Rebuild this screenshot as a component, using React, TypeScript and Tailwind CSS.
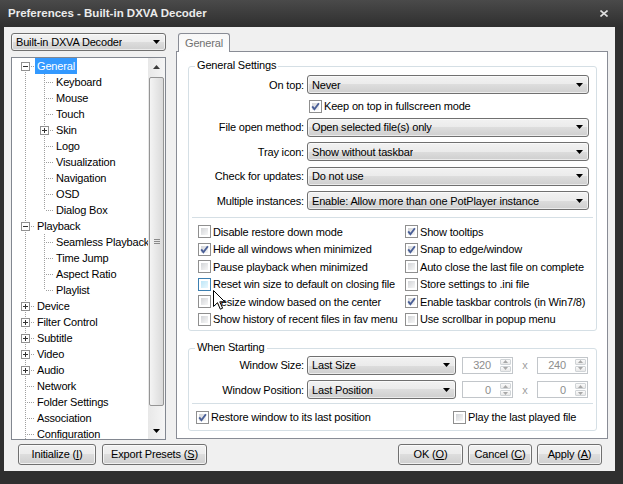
import React from 'react';

type TreeNode = { t: string; l: 0 | 1; e?: '+' | '-'; sel?: boolean; first?: boolean; last?: boolean };

const tree: TreeNode[] = [
  { t: 'General', l: 0, e: '-', sel: true, first: true },
  { t: 'Keyboard', l: 1 },
  { t: 'Mouse', l: 1 },
  { t: 'Touch', l: 1 },
  { t: 'Skin', l: 1, e: '+' },
  { t: 'Logo', l: 1 },
  { t: 'Visualization', l: 1 },
  { t: 'Navigation', l: 1 },
  { t: 'OSD', l: 1 },
  { t: 'Dialog Box', l: 1, last: true },
  { t: 'Playback', l: 0, e: '-' },
  { t: 'Seamless Playback', l: 1 },
  { t: 'Time Jump', l: 1 },
  { t: 'Aspect Ratio', l: 1 },
  { t: 'Playlist', l: 1, last: true },
  { t: 'Device', l: 0, e: '+' },
  { t: 'Filter Control', l: 0, e: '+' },
  { t: 'Subtitle', l: 0, e: '+' },
  { t: 'Video', l: 0, e: '+' },
  { t: 'Audio', l: 0, e: '+' },
  { t: 'Network', l: 0 },
  { t: 'Folder Settings', l: 0 },
  { t: 'Association', l: 0 },
  { t: 'Configuration', l: 0 },
];

// left column / right column of the checkbox block
const options: [string, boolean, string, boolean][] = [
  ['Disable restore down mode', false, 'Show tooltips', true],
  ['Hide all windows when minimized', true, 'Snap to edge/window', true],
  ['Pause playback when minimized', false, 'Auto close the last file on complete', false],
  ['Reset win size to default on closing file', false, 'Store settings to .ini file', false],
  ['Resize window based on the center', false, 'Enable taskbar controls (in Win7/8)', true],
  ['Show history of recent files in fav menu', false, 'Use scrollbar in popup menu', false],
];

const btnBg = 'bg-[linear-gradient(#f2f2f2,#ebebeb_50%,#dddddd_50%,#cfcfcf)]';

function Arrow() {
  return (
    <svg width="7" height="4" viewBox="0 0 7 4" className="shrink-0">
      <path d="M0 0H7L3.5 4Z" fill="#000" />
    </svg>
  );
}

function Combo({ text, className }: { text: string; className: string }) {
  return (
    <div
      className={`flex items-center justify-between rounded-[3px] border border-[#707070] ${btnBg} pl-[4px] pr-[5px] shadow-[inset_0_0_0_1px_rgba(255,255,255,0.6)] ${className}`}
    >
      <span className="truncate">{text}</span>
      <Arrow />
    </div>
  );
}

function Check({ checked, hover }: { checked?: boolean; hover?: boolean }) {
  return (
    <span
      className={`relative flex h-[13px] w-[13px] shrink-0 border bg-white p-[2px] ${hover ? 'border-[#3c7fb1]' : 'border-[#8f8f8f]'}`}
    >
      <span
        className={`flex-1 bg-linear-to-br ${hover ? 'from-[#bde6f8] to-[#eaf8fd]' : 'from-[#d3d5d8] to-[#f7f7f7]'}`}
      />
      {checked && (
        <svg className="absolute left-0 top-0" width="11" height="11" viewBox="0 0 11 11">
          <path d="M2.2 5.4 L4.4 8.2 L8.9 2.2" fill="none" stroke="#4a5f97" strokeWidth="1.9" />
        </svg>
      )}
    </span>
  );
}

function CheckItem({ label, checked, hover, className }: { label: string; checked?: boolean; hover?: boolean; className?: string }) {
  return (
    <div className={`flex items-center gap-[2px] ${className ?? ''}`}>
      <Check checked={checked} hover={hover} />
      <span className="whitespace-nowrap">{label}</span>
    </div>
  );
}

function Cell({ top, bottom, expand }: { top: boolean; bottom: boolean; expand?: '+' | '-' }) {
  return (
    <svg width="19" height="16" viewBox="0 0 19 16" className="block shrink-0">
      {top && <line x1="9.5" y1="0" x2="9.5" y2="8" stroke="#a0a0a0" strokeDasharray="1 1" />}
      {bottom && <line x1="9.5" y1="8" x2="9.5" y2="16" stroke="#a0a0a0" strokeDasharray="1 1" />}
      <line x1="11" y1="8.5" x2="19" y2="8.5" stroke="#a0a0a0" strokeDasharray="1 1" />
      {expand && (
        <>
          <rect x="5.5" y="4.5" width="8" height="8" fill="#fff" stroke="#919191" />
          <line x1="7" y1="8.5" x2="12" y2="8.5" stroke="#333" />
          {expand === '+' && <line x1="9.5" y1="6" x2="9.5" y2="11" stroke="#333" />}
        </>
      )}
    </svg>
  );
}

function VLine() {
  return (
    <svg width="19" height="16" viewBox="0 0 19 16" className="block shrink-0">
      <line x1="9.5" y1="0" x2="9.5" y2="16" stroke="#a0a0a0" strokeDasharray="1 1" />
    </svg>
  );
}

function SpinHalf({ up }: { up?: boolean }) {
  return (
    <div className="flex flex-1 items-center justify-center rounded-[1px] border border-[#d0d4d7] bg-linear-to-b from-[#fbfbfb] to-[#e8e8e8]">
      <svg width="5" height="3" viewBox="0 0 5 3">
        <path d={up ? 'M0 3H5L2.5 0Z' : 'M0 0H5L2.5 3Z'} fill="#a8a8a8" />
      </svg>
    </div>
  );
}

function Spin({ v }: { v: string }) {
  return (
    <div className="flex h-[17px] w-[51px] items-center border border-[#c2c6ca] bg-white">
      <span className="flex-1 pr-[8px] text-right text-[#8d8d8d]">{v}</span>
      <div className="flex h-full w-[13px] flex-col gap-px p-px">
        <SpinHalf up />
        <SpinHalf />
      </div>
    </div>
  );
}

function Btn({ text, hot, className }: { text: string; hot: string; className: string }) {
  return (
    <button
      className={`flex h-[21px] items-center justify-center rounded-[3px] border border-[#707070] ${btnBg} text-black shadow-[inset_0_0_0_1px_rgba(255,255,255,0.7)] ${className}`}
    >
      {text} (<u>{hot}</u>)
    </button>
  );
}

function Row({ label, children }: { label: string; children: React.ReactNode }) {
  return (
    <div className="flex h-[24.5px] items-center">
      <span className="w-[115px] text-right">{label}</span>
      {children}
    </div>
  );
}

export default function App() {
  return (
    <div className="relative h-[484px] w-[623px] overflow-hidden bg-[#2f2f2f] text-[11px] tracking-[-0.17px] text-black [font-family:'Liberation_Sans',Arial,sans-serif]">
      {/* title bar */}
      <div className="flex h-[27px] items-center justify-between bg-linear-to-b from-[#4a4a4a] to-[#2f2f2f] pl-[8px] pr-[15px]">
        <span className="text-[11.5px] font-bold tracking-normal text-[#ebebeb]">Preferences - Built-in DXVA Decoder</span>
        <svg width="8" height="7" viewBox="0 0 8 7">
          <path d="M0.5 0.5L7.5 6.5M7.5 0.5L0.5 6.5" stroke="#e0e0e0" strokeWidth="1.6" />
        </svg>
      </div>

      {/* client */}
      <div className="ml-[4px] flex h-[444px] w-[611px] flex-col bg-[#f0f0f0]">
        <div className="flex pl-[7px] pt-[6px]">
          {/* left: preset combo + tree */}
          <div className="flex w-[155px] flex-col">
            <Combo text="Built-in DXVA Decoder" className="h-[18px] w-full pl-[3px]" />
            <div className="mt-[6px] flex h-[383px] border border-[#828790] bg-white">
              <div className="flex-1 overflow-hidden pl-[4px]">
                {tree.map((n, i) => (
                  <div key={i} className="flex h-[16px] items-center">
                    {n.l === 1 && <VLine />}
                    <Cell top={!n.first} bottom={!n.last} expand={n.e} />
                    <span
                      className={
                        n.sel
                          ? 'h-[16px] whitespace-nowrap bg-[#3399ff] px-[2px] leading-[16px] text-white'
                          : 'h-[16px] whitespace-nowrap px-[2px] leading-[16px]'
                      }
                    >
                      {n.t}
                    </span>
                  </div>
                ))}
              </div>
              {/* scrollbar */}
              <div className="flex w-[17px] flex-col bg-linear-to-r from-[#e8e8e8] to-[#f5f5f5]">
                <div className="flex h-[17px] items-center justify-center">
                  <svg width="7" height="4" viewBox="0 0 7 4">
                    <path d="M0 4H7L3.5 0Z" fill="#3c3c3c" />
                  </svg>
                </div>
                <div className="flex flex-1 flex-col">
                  <div className="mx-[1px] mt-[2px] flex h-[329px] items-center justify-center rounded-[2px] border border-[#959595] bg-linear-to-r from-[#f4f4f4] to-[#dadada]">
                    <div className="flex w-[6px] flex-col gap-[1px]">
                      <div className="h-px bg-[#8a8a8a]" />
                      <div className="h-px bg-[#8a8a8a]" />
                      <div className="h-px bg-[#8a8a8a]" />
                    </div>
                  </div>
                </div>
                <div className="flex h-[17px] items-center justify-center">
                  <Arrow />
                </div>
              </div>
            </div>
          </div>

          {/* right: tab */}
          <div className="ml-[10px] flex w-[432px] flex-col">
            <div className="flex h-[18px]">
              <div className="relative z-10 ml-[2px] flex h-[19px] items-center rounded-t-[3px] border border-b-0 border-[#898c95] bg-linear-to-b from-[#f7f7f7] to-[#ffffff] px-[6px] text-[#707070]">
                General
              </div>
            </div>
            <div className="h-[388px] border border-[#898c95] bg-white pl-[11px] pr-[10px] pt-[14px]">
              {/* General Settings */}
              <div className="relative h-[265px] rounded-[3px] border border-[#d5dfe5] pt-[5.5px]">
                <span className="absolute -top-[9px] left-[6px] bg-white px-[2px] leading-[14px]">General Settings</span>
                <Row label="On top:">
                  <Combo text="Never" className="ml-[3px] h-[19px] w-[282px]" />
                </Row>
                <div className="flex h-[18px] items-center pl-[120px]">
                  <CheckItem label="Keep on top in fullscreen mode" checked />
                </div>
                <Row label="File open method:">
                  <Combo text="Open selected file(s) only" className="ml-[3px] h-[19px] w-[282px]" />
                </Row>
                <Row label="Tray icon:">
                  <Combo text="Show without taskbar" className="ml-[3px] h-[19px] w-[282px]" />
                </Row>
                <Row label="Check for updates:">
                  <Combo text="Do not use" className="ml-[3px] h-[19px] w-[282px]" />
                </Row>
                <Row label="Multiple instances:">
                  <Combo text="Enable: Allow more than one PotPlayer instance" className="ml-[3px] h-[19px] w-[282px]" />
                </Row>
                <div className="mx-[3px] mt-[4px] h-px bg-[#d5dfe5]" />
                <div className="mt-[5px] pl-[9px]">
                  {options.map(([a, ac, b, bc], i) => (
                    <div key={i} className="flex h-[17.5px] items-center">
                      <div className="w-[203px] overflow-hidden">
                        <CheckItem label={a} checked={ac} hover={i === 3} />
                      </div>
                      <CheckItem label={b} checked={bc} className="ml-[4px]" />
                    </div>
                  ))}
                </div>
              </div>

              {/* When Starting */}
              <div className="relative mt-[17px] h-[83px] rounded-[3px] border border-[#d5dfe5] pt-[4px]">
                <span className="absolute -top-[9px] left-[6px] bg-white px-[2px] leading-[14px]">When Starting</span>
                <Row label="Window Size:">
                  <Combo text="Last Size" className="ml-[3px] h-[19px] w-[149px]" />
                  <div className="ml-[6px]">
                    <Spin v="320" />
                  </div>
                  <span className="w-[24px] text-center text-[#a0a0a0]">x</span>
                  <Spin v="240" />
                </Row>
                <Row label="Window Position:">
                  <Combo text="Last Position" className="ml-[3px] h-[19px] w-[149px]" />
                  <div className="ml-[6px]">
                    <Spin v="0" />
                  </div>
                  <span className="w-[24px] text-center text-[#a0a0a0]">x</span>
                  <Spin v="0" />
                </Row>
                <div className="mx-[3px] mt-[1px] h-px bg-[#d5dfe5]" />
                <div className="mt-[4px] flex h-[18px] items-center pl-[7px]">
                  <CheckItem label="Restore window to its last position" checked className="w-[257px]" />
                  <CheckItem label="Play the last played file" />
                </div>
              </div>
            </div>
          </div>
        </div>

        {/* bottom buttons */}
        <div className="mt-[4px] flex justify-between pl-[14px] pr-[13px]">
          <div className="flex gap-[6px]">
            <Btn text="Initialize" hot="I" className="w-[78px]" />
            <Btn text="Export Presets" hot="S" className="w-[105px]" />
          </div>
          <div className="flex gap-[5px]">
            <Btn text="OK" hot="O" className="w-[65px]" />
            <Btn text="Cancel" hot="C" className="w-[64px]" />
            <Btn text="Apply" hot="A" className="w-[65px]" />
          </div>
        </div>
      </div>

      {/* mouse pointer */}
      <svg className="absolute left-[213px] top-[290px]" width="13" height="21" viewBox="0 0 13 21">
        <path d="M0.5 0.5V16.5L4.5 12.7L7.3 19.2L9.6 18.2L6.8 11.8H11.8Z" fill="#fff" stroke="#000" strokeWidth="1" />
      </svg>
    </div>
  );
}
